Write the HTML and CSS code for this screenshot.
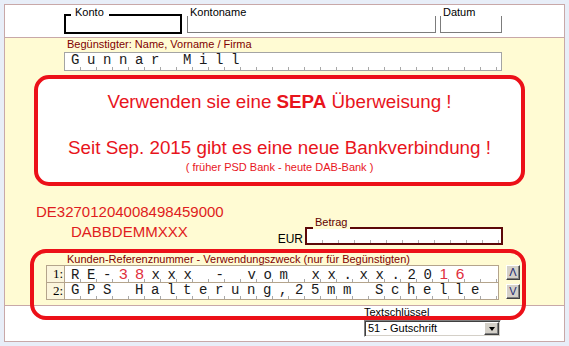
FILE: index.html
```html
<!DOCTYPE html>
<html lang="de">
<head>
<meta charset="utf-8">
<title>Überweisung</title>
<link rel="stylesheet" href="styles.css">
</head>
<body>
<div class="form">
  <div class="top">
    <div class="konto">
      <div class="legend-head"><span class="lbl">Konto</span></div>
      <div class="konto-body"></div>
    </div>
    <div class="open-field kontoname"><span class="lbl">Kontoname</span><div class="open-box"></div></div>
    <div class="open-field datum"><span class="lbl">Datum</span><div class="open-box"></div></div>
  </div>

  <div class="main">
    <div class="lbl brown benef-lbl">Begünstigter: Name, Vorname / Firma</div>
    <div class="comb benef">Gunnar Mill</div>

    <div class="notice">
      <p class="n1">Verwenden sie eine <b>SEPA</b> Überweisung !</p>
      <p class="n2">Seit Sep. 2015 gibt es eine neue Bankverbindung !</p>
      <p class="n3">( früher PSD Bank - heute DAB-Bank )</p>
    </div>

    <div class="bank-row">
      <div class="bank">
        <div class="iban">DE32701204008498459000</div>
        <div class="bic">DABBDEMMXXX</div>
      </div>
      <div class="amount">
        <span class="eur">EUR</span>
        <div class="betrag">
          <div class="legend-head betrag-head"><span class="lbl">Betrag</span></div>
          <div class="betrag-body"></div>
        </div>
      </div>
    </div>

    <div class="lbl brown purpose-lbl">Kunden-Referenznummer - Verwendungszweck (nur für Begünstigten)</div>
    <div class="purpose">
      <div class="rows">
        <div class="row"><span class="num">1:</span><span class="comb txt">RE-<span class="red">38</span>xxx - vom xx.xx.20<span class="red">16</span></span></div>
        <div class="row"><span class="num">2:</span><span class="comb txt">GPS Halterung,25mm Schelle</span></div>
      </div>
      <div class="btns">
        <span class="btn">&#923;</span>
        <span class="btn">V</span>
      </div>
    </div>
  </div>

  <div class="bottom">
    <div class="key">
      <div class="lbl key-lbl">Textschlüssel</div>
      <div class="select"><span class="sel-text">51 - Gutschrift</span><span class="sel-btn"><span class="tri"></span></span></div>
    </div>
  </div>

  <div class="highlight"></div>
</div>
</body>
</html>
```

FILE: styles.css
```css
* { box-sizing: border-box; }
html, body { margin: 0; }
body {
  background: #e8eef8;
  padding: 4px 0 0 4px;
  width: 569px;
  height: 346px;
  overflow: hidden;
  font-family: "Liberation Sans", Arial, sans-serif;
  font-size: 11px;
  color: #000;
}
.form {
  position: relative;
  width: 561px;
  height: 338px;
  border: 1px solid #c8a8a8;
  background: #fff;
  display: flex;
  flex-direction: column;
}
.lbl { line-height: 11px; white-space: nowrap; }
.brown { color: #800000; }

/* top */
.top {
  height: 33px;
  flex: none;
  border-bottom: 1px solid #c8a8a8;
  display: flex;
  align-items: flex-start;
  padding-left: 59px;
}
.konto { width: 118px; }
.legend-head { display: flex; align-items: flex-end; height: 11px; }
.legend-head::before { content: ""; width: 7px; border-bottom: 2px solid #000; }
.legend-head::after { content: ""; flex: 1; border-bottom: 2px solid #000; }
.legend-head .lbl { padding: 0 5px 0 4px; margin-bottom: -2px; }
.konto-body { height: 18px; border: 2px solid #000; border-top: none; }

.open-field { display: flex; flex-direction: column; padding-top: 2px; }
.open-field .lbl { padding-left: 3px; }
.open-box { height: 17px; margin-top: -2px; border: 1px solid #7c7c7c; border-top: none; }
.kontoname { width: 249px; margin-left: 5px; }
.datum { width: 62px; margin-left: 4px; }

/* main */
.main {
  height: 268px;
  flex: none;
  background: #fffbd3;
  border-bottom: 1px solid #c8a8a8;
  display: flex;
  flex-direction: column;
  align-items: flex-start;
}
.benef-lbl { margin-left: 62px; line-height: 13px; }
.comb {
  font-family: "Liberation Mono", "Courier New", monospace;
  font-size: 14px;
  letter-spacing: 7.6px;
  line-height: 15px;
  white-space: pre;
  color: #1a1a1a;
  background: #fff linear-gradient(to right, transparent 15px, #a8a8a8 15px) 0 100% / 16px 3px repeat-x;
}
.benef {
  margin: 1px 0 0 59px;
  width: 438px;
  height: 19px;
  border: 1px solid #a4a4a4;
  padding-left: 6px;
}

.notice {
  margin: 4px 0 0 29px;
  width: 491px;
  height: 111px;
  border: 4px solid #ec1018;
  border-radius: 15px;
  background: #fff;
  color: #e8141c;
  text-align: center;
  display: flex;
  flex-direction: column;
}
.notice p { margin: 0; white-space: nowrap; }
.n1 { font-size: 18.8px; line-height: 22px; margin-top: 12px !important; }
.n2 { font-size: 18.8px; line-height: 22px; margin-top: 24px !important; }
.n3 { font-size: 11px; line-height: 13px; margin-top: 2px !important; }

.bank-row { display: flex; align-self: stretch; margin-top: 16px; }
.bank { margin-left: 31px; color: #e01c20; font-size: 15px; line-height: 20px; }
.bic { padding-left: 35px; }
.amount {
  margin: 16px 61px 0 auto;
  display: flex;
  align-items: flex-end;
}
.eur { font-size: 12px; line-height: 14px; margin-bottom: -1px; }
.betrag { width: 198px; margin-left: 2px; }
.betrag-head { color: #600000; }
.betrag-head::before { width: 8px; border-bottom-color: #5c0808; }
.betrag-head::after { border-bottom-color: #5c0808; }
.betrag-head .lbl { padding: 0 3px 0 2px; margin-bottom: 1px; }
.betrag-body {
  height: 16px;
  border: 2px solid #5c0808;
  border-top: none;
  background: #fff linear-gradient(to right, transparent 15px, #b0b0b0 15px) 0 100% / 16px 3px repeat-x;
}

.purpose-lbl { margin: 8px 0 0 62px; line-height: 12px; }
.purpose { display: flex; margin-left: 41px; }
.rows { width: 453px; }
.row { display: flex; }
.num {
  width: 18px;
  height: 18px;
  border: 1px solid #b4a48c;
  border-right: none;
  background: #fbf5dc;
  font-family: "Liberation Serif", "Times New Roman", serif;
  font-size: 13px;
  line-height: 15px;
  text-align: right;
  padding-right: 1px;
}
.txt {
  flex: 1;
  height: 18px;
  border: 1px solid #b4a48c;
  padding-left: 6px;
}
.row + .row .num, .row + .row .txt { border-top: none; height: 17px; }
.red {
  font-family: "Liberation Sans", Arial, sans-serif;
  font-size: 15.5px;
  color: #e03040;
}
.btns { display: flex; flex-direction: column; gap: 4px; margin-left: 7px; }
.btn {
  width: 14px;
  height: 15px;
  background: #d4d0c8;
  border: 1px solid;
  border-color: #fff #404040 #404040 #fff;
  box-shadow: inset -1px -1px #808080;
  color: #1c2c70;
  font-size: 11px;
  line-height: 12px;
  text-align: center;
}

/* bottom */
.bottom { flex: 1; display: flex; justify-content: flex-end; padding-right: 63px; }
.key { width: 137px; }
.key-lbl { margin-top: 1px; }
.select {
  margin-top: 2px;
  height: 17px;
  border: 1px solid;
  border-color: #808080 #fff #fff #808080;
  box-shadow: inset 1px 1px #404040, inset -1px -1px #d4d0c8;
  background: #fff;
  display: flex;
  align-items: center;
  padding: 0 1px 0 3px;
}
.sel-text { flex: 1; line-height: 13px; }
.sel-btn {
  width: 15px;
  height: 13px;
  background: #d4d0c8;
  border: 1px solid;
  border-color: #fff #404040 #404040 #fff;
  box-shadow: inset -1px -1px #808080;
  display: flex;
  align-items: center;
  justify-content: center;
}
.tri {
  width: 0;
  height: 0;
  border-left: 3.5px solid transparent;
  border-right: 3.5px solid transparent;
  border-top: 4px solid #000;
}

.highlight {
  position: absolute;
  left: 25px;
  top: 244px;
  width: 496px;
  height: 71px;
  border: 4px solid #ec1018;
  border-radius: 16px;
  pointer-events: none;
}
```
